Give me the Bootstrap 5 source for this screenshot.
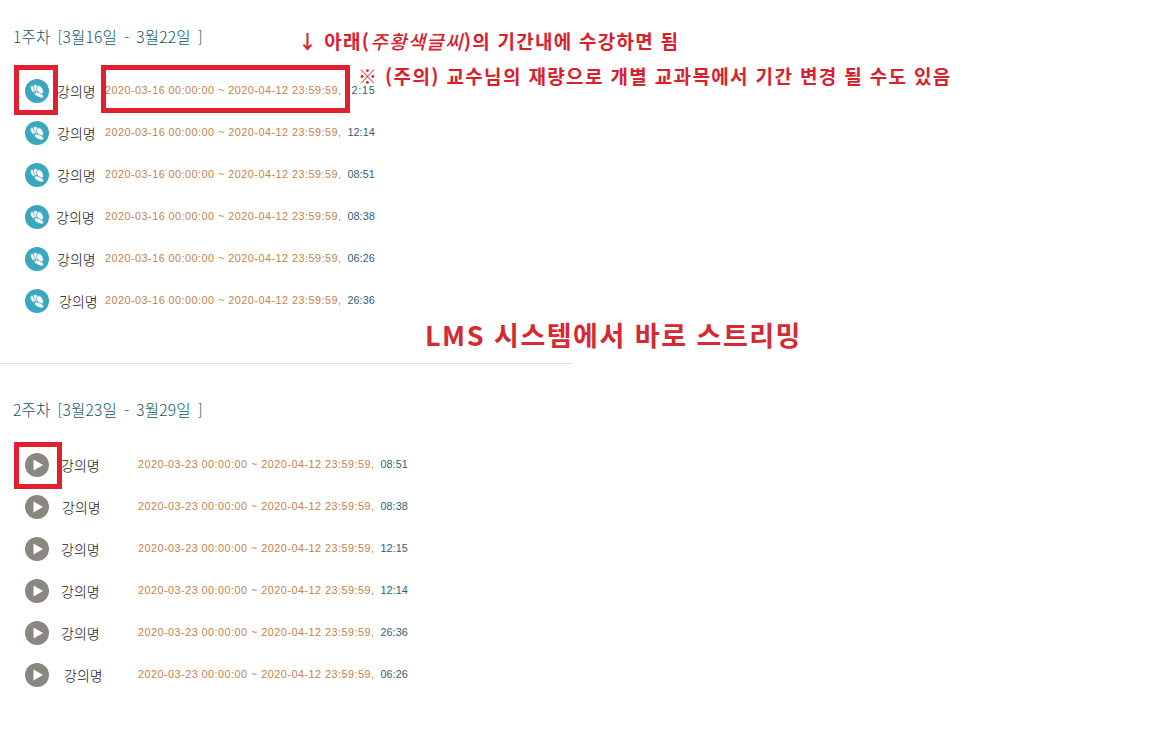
<!DOCTYPE html>
<html lang="ko">
<head>
  <meta charset="UTF-8">
  <meta name="viewport" content="width=device-width, initial-scale=1.0">
  <title>주차별 강의</title>
  <link href="https://cdn.jsdelivr.net/npm/bootstrap@5.3.0/dist/css/bootstrap.min.css" rel="stylesheet">
  <style>
    body {
      background: #fff;
      font-family: "Liberation Sans", "Noto Sans CJK KR", sans-serif;
      position: relative;
      height: 734px;
      overflow: hidden;
    }
    .week-box { width: 573px; }
    .week-one { height: 364px; padding-top: 25px; border-bottom: 1px solid #e0e0e0; }
    .week-two { padding-top: 34px; }
    .week-title {
      font-family: "Noto Sans CJK KR", sans-serif;
      font-size: 15.5px;
      line-height: 22px;
      margin: 0 0 23px 13px;
      color: #0f5566;
      font-weight: 300;
      word-spacing: 2.5px;
      letter-spacing: .2px;
    }
    .week-two .week-title { margin-bottom: 24px; }
    .lec-row { height: 42px; padding-left: 25px; }
    .lec-icon { width: 24px; height: 24px; flex: none; display: block; }
    .lec-name {
      font-family: "Noto Sans CJK KR", sans-serif;
      font-size: 14px;
      color: #111;
      width: 56px;
      padding-left: 8px;
      flex: none;
      white-space: nowrap;
      font-weight: 300;
    }
    .week-two .lec-name { width: 89px; padding-left: 12px; }
    .week-two .lec-name.n1 { padding-left: 13px; }
    .week-two .lec-name.n3 { padding-left: 15px; }
    .lec-name.n1 { padding-left: 7px; }
    .lec-name.n3 { padding-left: 10px; }
    .lec-date { font-size: 10.8px; color: #c47f4c; letter-spacing: .49px; white-space: nowrap; padding-bottom: 1px; }
    .lec-time { font-size: 10.8px; color: #2f6076; letter-spacing: .1px; margin-left: 6px; white-space: nowrap; padding-bottom: 1px; }
    .lec-time.cut { margin-left: 10px; letter-spacing: .8px; line-height: 1; }
    .red-frame { position: absolute; border: 5px solid #e0202e; }
    .frame-a { left: 14px; top: 65px; width: 44px; height: 50px; }
    .frame-b { left: 101px; top: 65px; width: 249px; height: 48px; }
    .frame-c { left: 14px; top: 442px; width: 48px; height: 47px; }
    .note {
      position: absolute;
      color: #d9202c;
      font-family: "Noto Sans CJK KR", sans-serif;
      font-weight: 700;
      white-space: nowrap;
      line-height: 1;
    }
    .note em { font-style: italic; font-weight: 500; }
    .note-a { left: 298px; top: 31px; font-size: 19px; letter-spacing: 1.25px; }
    .note-a .arr { margin-right: 6px; }
    .note-b { left: 358px; top: 66px; font-size: 19px; letter-spacing: 1.35px; }
    .note-c { left: 425px; top: 321px; font-size: 27px; letter-spacing: 1.5px; color: #d42a33; }
  </style>
</head>
<body>
  <svg width="0" height="0" class="d-block">
    <symbol id="ic-shell" viewBox="0 0 24 24">
      <circle cx="12" cy="12" r="12" fill="#3aa7bf"/>
      <g fill="#fff" stroke="#3aa7bf" stroke-width=".7">
        <ellipse cx="8" cy="10" rx="2.200" ry="3.600" transform="rotate(-25 8 10)"/>
        <ellipse cx="11.200" cy="9.200" rx="2.400" ry="3.900" transform="rotate(-22 11.200 9.200)"/>
        <ellipse cx="15" cy="11" rx="2.900" ry="4.600" transform="rotate(-25 15 11)"/>
        <ellipse cx="14" cy="16" rx="5" ry="2.200" transform="rotate(25 14 16)"/>
      </g>
    </symbol>
    <symbol id="ic-play" viewBox="0 0 24 24">
      <circle cx="12" cy="12" r="12" fill="#8a8780"/>
      <path d="M8.500 6.500 18 12l-9.500 5.500z" fill="#fff"/>
    </symbol>
  </svg>

  <section class="week-box week-one">
    <h2 class="week-title">1주차 [3월16일 - 3월22일 ]</h2>
    <div class="lec-row d-flex align-items-center">
      <svg class="lec-icon"><use href="#ic-shell"/></svg>
      <span class="lec-name">강의명</span>
      <span class="lec-date">2020-03-16 00:00:00 ~ 2020-04-12 23:59:59,</span><span class="lec-time cut">2:15</span>
    </div>
    <div class="lec-row d-flex align-items-center">
      <svg class="lec-icon"><use href="#ic-shell"/></svg>
      <span class="lec-name">강의명</span>
      <span class="lec-date">2020-03-16 00:00:00 ~ 2020-04-12 23:59:59,</span><span class="lec-time">12:14</span>
    </div>
    <div class="lec-row d-flex align-items-center">
      <svg class="lec-icon"><use href="#ic-shell"/></svg>
      <span class="lec-name">강의명</span>
      <span class="lec-date">2020-03-16 00:00:00 ~ 2020-04-12 23:59:59,</span><span class="lec-time">08:51</span>
    </div>
    <div class="lec-row d-flex align-items-center">
      <svg class="lec-icon"><use href="#ic-shell"/></svg>
      <span class="lec-name n1">강의명</span>
      <span class="lec-date">2020-03-16 00:00:00 ~ 2020-04-12 23:59:59,</span><span class="lec-time">08:38</span>
    </div>
    <div class="lec-row d-flex align-items-center">
      <svg class="lec-icon"><use href="#ic-shell"/></svg>
      <span class="lec-name">강의명</span>
      <span class="lec-date">2020-03-16 00:00:00 ~ 2020-04-12 23:59:59,</span><span class="lec-time">06:26</span>
    </div>
    <div class="lec-row d-flex align-items-center">
      <svg class="lec-icon"><use href="#ic-shell"/></svg>
      <span class="lec-name n3">강의명</span>
      <span class="lec-date">2020-03-16 00:00:00 ~ 2020-04-12 23:59:59,</span><span class="lec-time">26:36</span>
    </div>
  </section>

  <section class="week-box week-two">
    <h2 class="week-title">2주차 [3월23일 - 3월29일 ]</h2>
    <div class="lec-row d-flex align-items-center">
      <svg class="lec-icon"><use href="#ic-play"/></svg>
      <span class="lec-name">강의명</span>
      <span class="lec-date">2020-03-23 00:00:00 ~ 2020-04-12 23:59:59,</span><span class="lec-time">08:51</span>
    </div>
    <div class="lec-row d-flex align-items-center">
      <svg class="lec-icon"><use href="#ic-play"/></svg>
      <span class="lec-name n1">강의명</span>
      <span class="lec-date">2020-03-23 00:00:00 ~ 2020-04-12 23:59:59,</span><span class="lec-time">08:38</span>
    </div>
    <div class="lec-row d-flex align-items-center">
      <svg class="lec-icon"><use href="#ic-play"/></svg>
      <span class="lec-name">강의명</span>
      <span class="lec-date">2020-03-23 00:00:00 ~ 2020-04-12 23:59:59,</span><span class="lec-time">12:15</span>
    </div>
    <div class="lec-row d-flex align-items-center">
      <svg class="lec-icon"><use href="#ic-play"/></svg>
      <span class="lec-name">강의명</span>
      <span class="lec-date">2020-03-23 00:00:00 ~ 2020-04-12 23:59:59,</span><span class="lec-time">12:14</span>
    </div>
    <div class="lec-row d-flex align-items-center">
      <svg class="lec-icon"><use href="#ic-play"/></svg>
      <span class="lec-name">강의명</span>
      <span class="lec-date">2020-03-23 00:00:00 ~ 2020-04-12 23:59:59,</span><span class="lec-time">26:36</span>
    </div>
    <div class="lec-row d-flex align-items-center">
      <svg class="lec-icon"><use href="#ic-play"/></svg>
      <span class="lec-name n3">강의명</span>
      <span class="lec-date">2020-03-23 00:00:00 ~ 2020-04-12 23:59:59,</span><span class="lec-time">06:26</span>
    </div>
  </section>

  <div class="red-frame frame-a"></div>
  <div class="red-frame frame-b"></div>
  <div class="red-frame frame-c"></div>
  <div class="note note-a"><span class="arr">↓</span>아래(<em>주황색글씨</em>)의 기간내에 수강하면 됨</div>
  <div class="note note-b">※ (주의) 교수님의 재량으로 개별 교과목에서 기간 변경 될 수도 있음</div>
  <div class="note note-c">LMS 시스템에서 바로 스트리밍</div>
</body>
</html>
